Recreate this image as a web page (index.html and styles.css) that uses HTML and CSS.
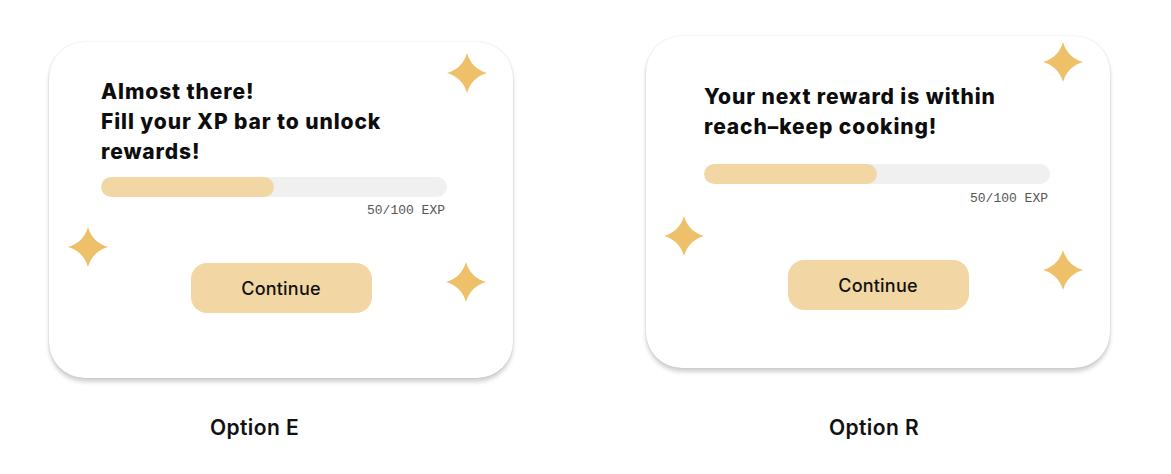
FILE: index.html
```html
<!DOCTYPE html>
<html>
<head>
<meta charset="utf-8">
<link rel="stylesheet" href="styles.css">
</head>
<body>
<div class="stage">
  <div class="option option-e">
    <div class="card card-e">
      <svg class="star star-tr" viewBox="0 0 40 40"><path d="M20 0Q24.5 15.5 40 20Q24.5 24.5 20 40Q15.5 24.5 0 20Q15.5 15.5 20 0Z"/></svg>
      <svg class="star star-l" viewBox="0 0 40 40"><path d="M20 0Q24.5 15.5 40 20Q24.5 24.5 20 40Q15.5 24.5 0 20Q15.5 15.5 20 0Z"/></svg>
      <svg class="star star-br" viewBox="0 0 40 40"><path d="M20 0Q24.5 15.5 40 20Q24.5 24.5 20 40Q15.5 24.5 0 20Q15.5 15.5 20 0Z"/></svg>
      <h2 class="title">Almost there!<br>Fill your XP bar to unlock<br>rewards!</h2>
      <div class="bar"><div class="fill" style="width:50%"></div></div>
      <div class="exp">50/100 EXP</div>
      <button class="btn">Continue</button>
    </div>
    <div class="label">Option E</div>
  </div>
  <div class="option option-r">
    <div class="card card-r">
      <svg class="star star-tr" viewBox="0 0 40 40"><path d="M20 0Q24.5 15.5 40 20Q24.5 24.5 20 40Q15.5 24.5 0 20Q15.5 15.5 20 0Z"/></svg>
      <svg class="star star-l" viewBox="0 0 40 40"><path d="M20 0Q24.5 15.5 40 20Q24.5 24.5 20 40Q15.5 24.5 0 20Q15.5 15.5 20 0Z"/></svg>
      <svg class="star star-br" viewBox="0 0 40 40"><path d="M20 0Q24.5 15.5 40 20Q24.5 24.5 20 40Q15.5 24.5 0 20Q15.5 15.5 20 0Z"/></svg>
      <h2 class="title">Your next reward is within<br>reach–keep cooking!</h2>
      <div class="bar"><div class="fill" style="width:50%"></div></div>
      <div class="exp">50/100 EXP</div>
      <button class="btn">Continue</button>
    </div>
    <div class="label">Option R</div>
  </div>
</div>
</body>
</html>
```
FILE: styles.css
```css
* { box-sizing: border-box; }
html, body { margin: 0; padding: 0; background: #ffffff; }
body { font-family: Inter, "Noto Sans", sans-serif; color: #111; }

.stage {
  display: flex;
  align-items: flex-start;
  padding-left: 49px;
  gap: 133px;
}

.option { display: flex; flex-direction: column; width: 464px; }
.option-e { padding-top: 42px; }
.option-r { padding-top: 36px; }

.card {
  position: relative;
  width: 464px;
  background: #fff;
  border-radius: 36px;
  box-shadow: 0 0 2px rgba(0,0,0,0.14), 0 4px 4px rgba(0,0,0,0.18);
  display: flex;
  flex-direction: column;
}
.card-e { height: 336px; padding: 35px 52px 0 52px; }
.card-r { height: 332px; padding: 46px 58px 0 58px; }

.title {
  margin: 0;
  font-family: Inter, sans-serif;
  font-weight: 800;
  font-size: 21px;
  line-height: 30px;
  color: #0d0d0d;
  letter-spacing: 0.9px;
  white-space: nowrap;
}

.bar {
  height: 20px;
  width: 346px;
  border-radius: 10px;
  background: #f0f0f0;
  overflow: hidden;
}
.card-e .bar { margin-top: 10px; }
.card-r .bar { margin-top: 22px; }
.fill { height: 100%; background: #f2d7a4; border-radius: 10px; }

.exp {
  width: 346px;
  text-align: right;
  font-family: "Liberation Mono", monospace;
  font-size: 13px;
  line-height: 16px;
  color: #555;
  padding-right: 2px;
}
.card-e .exp { margin-top: 6px; }
.card-r .exp { margin-top: 7px; }

.btn {
  align-self: center;
  width: 181px;
  height: 50px;
  border: none;
  border-radius: 16px;
  background: #f2d7a4;
  font-family: Inter, sans-serif;
  font-weight: 500;
  font-size: 18px;
  letter-spacing: 0.2px;
  color: #111;
  padding: 0;
}
.card-e .btn { margin-top: 44px; }
.card-r .btn { margin-top: 53px; }

.star { position: absolute; width: 40px; height: 40px; fill: #efc06a; }
.card-e .star-tr { left: 398px; top: 11px; }
.card-e .star-l { left: 19px; top: 185px; }
.card-e .star-br { left: 397px; top: 220px; }
.card-r .star-tr { left: 397px; top: 6px; }
.card-r .star-l { left: 18px; top: 180px; }
.card-r .star-br { left: 397px; top: 214px; }

.label {
  font-family: Inter, sans-serif;
  font-weight: 600;
  font-size: 21px;
  line-height: 24px;
  letter-spacing: 0.4px;
}
.option-e .label { margin-top: 38px; margin-left: 161px; }
.option-r .label { margin-top: 48px; margin-left: 183px; }
```
